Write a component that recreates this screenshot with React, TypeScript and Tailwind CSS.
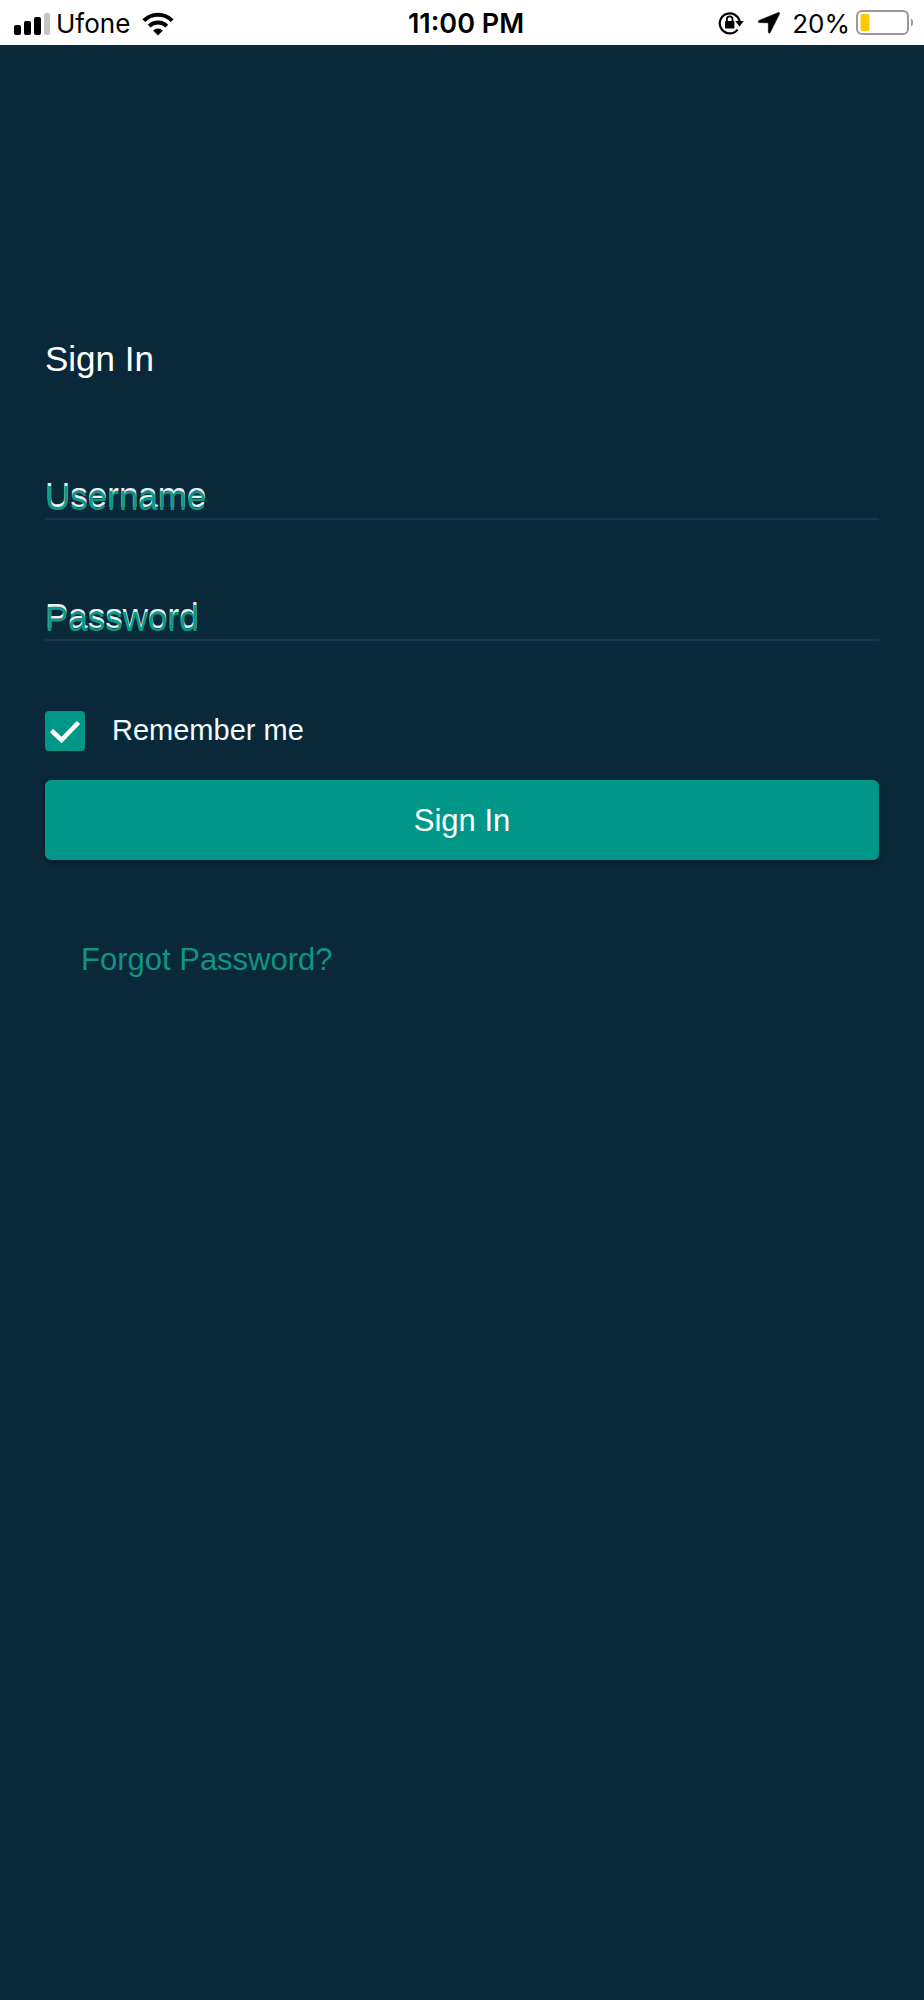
import { useState } from "react";

function SignalIcon() {
  return (
    <svg width="36" height="22" viewBox="0 0 36 22" aria-hidden="true">
      <rect x="0" y="12" width="7" height="10" rx="2" />
      <rect x="10" y="8" width="7" height="14" rx="2" />
      <rect x="20" y="4" width="7" height="18" rx="2" />
      <rect x="30" y="0" width="6" height="22" rx="2" fill="#c4c4c4" />
    </svg>
  );
}

function WifiIcon() {
  return (
    <svg width="32" height="24" viewBox="0 0 32 24" fill="none" stroke="#000" strokeWidth="4" aria-hidden="true">
      <path d="M1.8 8.6a20 20 0 0 1 28.4 0" />
      <path d="M7.2 14.2a12.5 12.5 0 0 1 17.6 0" />
      <path d="M16 23.5l-4.9-5a7 7 0 0 1 9.8 0z" fill="#000" stroke="none" />
    </svg>
  );
}

function RotationLockIcon() {
  return (
    <svg width="26" height="24" viewBox="0 0 26 24" fill="none" stroke="#000" aria-hidden="true">
      <path d="M19.6 18.6A10 10 0 1 1 21.6 10.5" strokeWidth="2.2" />
      <path d="M17.2 10h8.6l-4.3 5.4z" fill="#000" stroke="none" />
      <rect x="7" y="10" width="9.4" height="7.4" rx="1" fill="#000" stroke="none" />
      <path d="M8.9 10.5V8.2a2.8 2.8 0 0 1 5.6 0v2.3" strokeWidth="1.8" />
    </svg>
  );
}

function LocationIcon() {
  return (
    <svg width="22" height="22" viewBox="0 0 22 22" aria-hidden="true">
      <path d="M20.4.5L.9 8.6c-1.1.5-.8 2 .3 2l9.1.2.1 9.2c0 1.4 1.4 1.600 1.900.3L21.600 1.700c.3-.8-.4-1.500-1.200-1.200z" stroke="#000" strokeWidth="0.600" />
    </svg>
  );
}

function BatteryIcon() {
  return (
    <svg width="58" height="26" viewBox="0 0 58 26" aria-hidden="true">
      <rect x="1" y="1" width="51" height="23" rx="5" fill="none" stroke="#999" strokeWidth="2" />
      <rect x="4.5" y="4" width="9" height="17" rx="2" fill="#ffc800" />
      <path d="M55 8.5c2.8 1.3 2.8 6.7 0 8z" fill="#999" />
    </svg>
  );
}

function StatusBar() {
  return (
    <header className="grid h-[45px] grid-cols-[1fr_auto_1fr] items-center bg-white pr-2.5 pl-3.5 font-['Inter',sans-serif] text-[26px] leading-8 text-black">
      <div className="flex items-center gap-1.5 pt-0.5">
        <SignalIcon />
        <span>Ufone</span>
        <div className="pl-1.5">
          <WifiIcon />
        </div>
      </div>
      <span className="pt-0.5 pl-1 text-[27px] font-semibold">11:00 PM</span>
      <div className="flex items-center justify-end gap-1.5">
        <div className="flex items-center gap-3.5 pr-1.5">
          <RotationLockIcon />
          <LocationIcon />
        </div>
        <span className="pt-0.5">20%</span>
        <BatteryIcon />
      </div>
    </header>
  );
}

function Field({ id, label, type }: { id: string; label: string; type: string }) {
  return (
    <div className="relative">
      <input
        id={id}
        type={type}
        placeholder=" "
        className="peer block h-[50px] w-full border-b-2 border-[#173649] bg-transparent text-[35px] text-white outline-none"
      />
      <label
        htmlFor={id}
        className="pointer-events-none invisible absolute bottom-0.5 left-0 text-[35px] leading-10 text-[#0b9a87] [text-shadow:0_-3px_0_#e3f3f5] peer-placeholder-shown:visible"
      >
        {label}
      </label>
    </div>
  );
}

export default function App() {
  const [remember, setRemember] = useState(true);
  return (
    <div className="flex min-h-screen flex-col bg-[#092839] font-['Liberation_Sans',Arial,sans-serif]">
      <StatusBar />
      <main className="px-[45px] pt-[294px]">
        <form onSubmit={(e) => e.preventDefault()}>
          <h1 className="text-[35px] leading-10 text-white">Sign In</h1>
          <div className="flex flex-col gap-[71px] pt-[91px]">
            <Field id="username" label="Username" type="text" />
            <Field id="password" label="Password" type="password" />
          </div>
          <div className="flex items-center pt-[70px]">
            <div className="relative size-10">
              <input
                id="remember"
                type="checkbox"
                checked={remember}
                onChange={(e) => setRemember(e.target.checked)}
                className="block size-10 appearance-none rounded-sm border-2 border-[#009788] checked:bg-[#009788]"
              />
              {remember && (
                <svg className="pointer-events-none absolute inset-0" width="40" height="40" viewBox="0 0 40 40" fill="none" stroke="#fff" strokeWidth="4.5" aria-hidden="true">
                  <path d="M6.5 19.5l10 9.5L33.5 11.5" />
                </svg>
              )}
            </div>
            <label htmlFor="remember" className="pb-0.5 pl-[27px] text-[29px] leading-[38px] text-[#f4fbfd]">
              Remember me
            </label>
          </div>
          <button
            type="submit"
            className="mt-[29px] block h-20 w-full rounded-md bg-[#009788] pt-0.5 text-[31px] leading-10 text-white shadow-[0_2px_4px_rgba(0,0,0,0.4)]"
          >
            Sign In
          </button>
          <div className="pt-20 pl-9">
            <a href="#forgot" className="text-[31px] leading-10 text-[#0f9486]">
              Forgot Password?
            </a>
          </div>
        </form>
      </main>
    </div>
  );
}
